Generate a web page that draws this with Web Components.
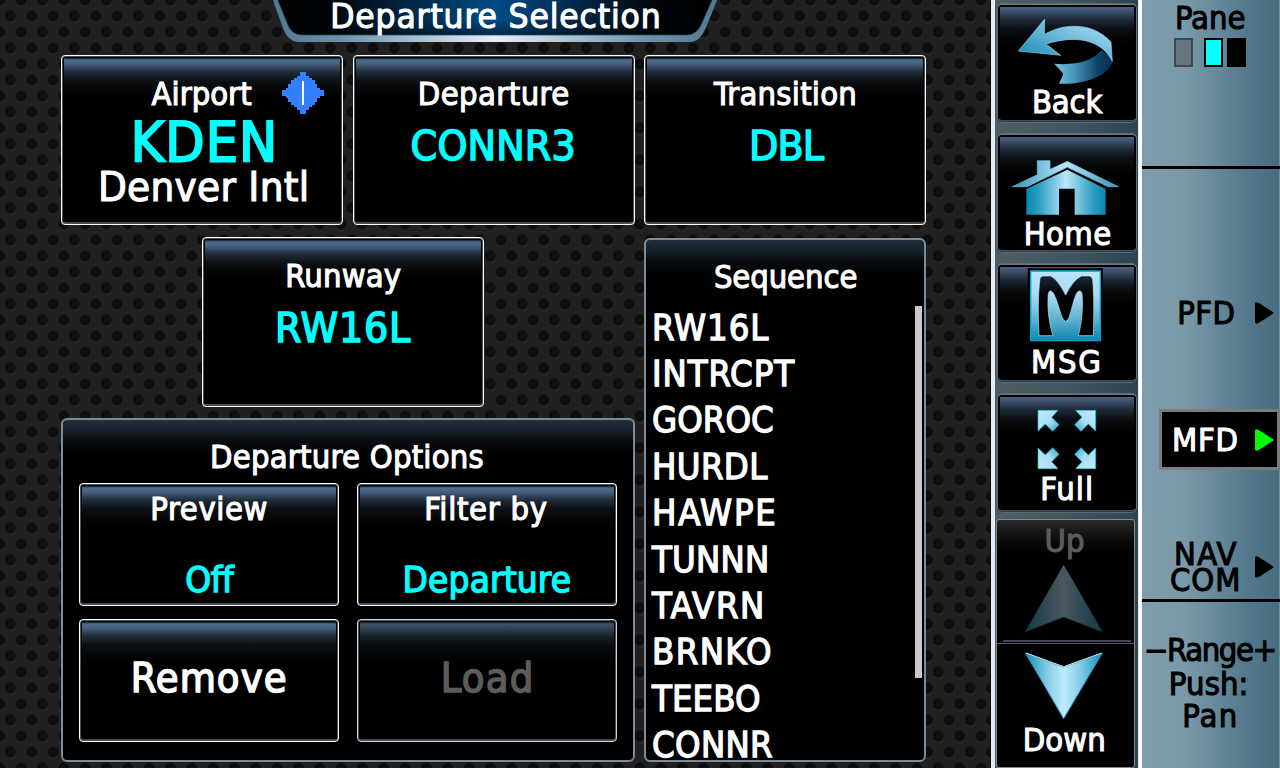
<!DOCTYPE html>
<html lang="en">
<head>
<meta charset="utf-8">
<title>Departure Selection</title>
<style>
html,body{margin:0;height:100%;overflow:hidden;background:#1d1d1d}
body{font-family:"DejaVu Sans Condensed","DejaVu Sans",sans-serif;font-stretch:condensed;color:#fff}
</style>
</head>
<body>
<gtc-screen>
  <title-tab slot="main"><ui-label size="34" width="326">Departure Selection</ui-label></title-tab>
  <departure-form slot="main">
    <touch-card slot="top"><ui-label size="31.5" width="101" gap="22.3">Airport</ui-label><ui-label size="55" width="140" gap="5.6" dx="2" heavy tone="cyan">KDEN</ui-label><ui-label size="40.5" width="206" gap="-3.8" dx="2">Denver Intl</ui-label><airport-mark slot="badge"></airport-mark></touch-card>
    <touch-card slot="top"><ui-label size="31.5" width="149" gap="22.3">Departure</ui-label><ui-label size="41" width="162" gap="15.4" heavy tone="cyan">CONNR3</ui-label></touch-card>
    <touch-card slot="top"><ui-label size="31.5" width="143" gap="22.3">Transition</ui-label><ui-label size="41" width="74" gap="15.4" dx="1" heavy tone="cyan">DBL</ui-label></touch-card>
    <touch-card slot="runway"><ui-label size="31.5" width="114" gap="22.3">Runway</ui-label><ui-label size="41" width="134" gap="15.4" heavy tone="cyan">RW16L</ui-label></touch-card>
    <group-panel slot="options">
      <ui-label size="31.5" width="272" gap="21.3" dx="-1">Departure Options</ui-label>
      <option-grid>
        <touch-card><ui-label size="31.5" width="115" gap="9.3">Preview</ui-label><ui-label size="35.5" width="49" gap="37" heavy tone="cyan">Off</ui-label></touch-card>
        <touch-card><ui-label size="31.5" width="121" gap="9.3" dx="-1">Filter by</ui-label><ui-label size="35.5" width="165" gap="37" heavy tone="cyan">Departure</ui-label></touch-card>
        <touch-card><ui-label size="40" width="153" gap="37.2" heavy>Remove</ui-label></touch-card>
        <touch-card dim><ui-label size="40" width="88" gap="37.2" heavy tone="dim">Load</ui-label></touch-card>
      </option-grid>
    </group-panel>
    <group-panel slot="sequence">
      <ui-label size="31.5" width="142" gap="21.3" dx="1">Sequence</ui-label>
      <waypoint-list></waypoint-list>
    </group-panel>
  </departure-form>

  <side-button slot="keys" icon="back" icon-height="83.4"><ui-label size="31.5" width="70">Back</ui-label></side-button>
  <side-button slot="keys" icon="home" icon-height="85.4"><ui-label size="31.5" width="85">Home</ui-label></side-button>
  <side-button slot="keys" icon="msg" icon-height="83.4"><ui-label size="31.5" width="67" dx="-1">MSG</ui-label></side-button>
  <side-button slot="keys" icon="full" icon-height="80.4"><ui-label size="31.5" width="50">Full</ui-label></side-button>
  <scroll-keys slot="keys"></scroll-keys>

  <pane-strip slot="strip"></pane-strip>
</gtc-screen>

<script>
const FAMILY = '"DejaVu Sans Condensed","DejaVu Sans",sans-serif';
const pen = document.createElement('canvas').getContext('2d');

class Base extends HTMLElement {
  constructor(){ super(); this.attachShadow({mode:'open'}); }
  paint(html){ this.shadowRoot.innerHTML = html; }
}

/* One line of text, tracked so that its ink spans the requested width. */
class UiLabel extends Base {
  connectedCallback(){
    const size = +this.getAttribute('size');
    const stroke = this.hasAttribute('heavy') ? size * .036 : 1.05;
    const stretch = 1.03;
    const want = (+this.getAttribute('width')) / stretch - stroke;
    const text = this.textContent.trim();
    pen.font = `condensed ${size}px ${FAMILY}`;
    const m = pen.measureText(text);
    const ink = m.actualBoundingBoxRight + m.actualBoundingBoxLeft;
    const ls = (want - ink) / Math.max(1, text.length - 1);
    const tones = {cyan:'#00ffff', dim:'#5c5c5c', black:'#000'};
    const color = tones[this.getAttribute('tone')] || '#fff';
    const left = this.getAttribute('align') === 'left';
    const drop = [31.5, 40, 41].includes(size) ? 1 : 0;
    this.paint(`<style>
      :host{display:flex;justify-content:${left?'flex-start':'center'};flex:none;
        height:${this.getAttribute('line')||size}px;line-height:${this.getAttribute('line')||size}px;
        font-size:${size}px;color:${color};white-space:pre;
        margin-top:${this.getAttribute('gap')||0}px;
        letter-spacing:${ls.toFixed(3)}px;-webkit-text-stroke:${stroke.toFixed(2)}px ${color}}
      span{margin-right:${(-ls).toFixed(3)}px;transform-origin:${left?'0':'50%'} 50%;
        transform:translate(${this.getAttribute('dx')||0}px,${drop}px) scaleX(${stretch})}
    </style><span><slot></slot></span>`);
  }
}

class GtcScreen extends Base {
  connectedCallback(){ this.paint(`<style>
    :host{display:grid;grid-template-columns:991px 4px 143px 4px 138px;width:1280px;height:768px;overflow:hidden}
    main{background:
      radial-gradient(circle,#101010 0 1.8px,#0b0b0b 3.8px,#101010 4.8px,#191919 5.6px,transparent 6.2px) -0.3px 0/21.333px 32px,
      radial-gradient(circle,#101010 0 1.8px,#0b0b0b 3.8px,#101010 4.8px,#191919 5.6px,transparent 6.2px) 10.4px 16px/21.333px 32px,
      radial-gradient(circle at 50% 53%,#2c2c2c 5px,transparent 6.8px) -0.3px 0/21.333px 32px,
      radial-gradient(circle at 50% 53%,#2c2c2c 5px,transparent 6.8px) 10.4px 16px/21.333px 32px,#202020;
      border-right:1px solid #111;box-sizing:border-box}
    .rule{background:#e4ecf8}
    .rule.b{background:linear-gradient(90deg,#dfe6ee,#fff 40%)}
    nav{background:linear-gradient(90deg,#4e5e65,#42565f 50%,#2b4552);display:flex;flex-direction:column;
      gap:10px;padding:3px 0 0 2px;box-sizing:border-box}
    aside{background:linear-gradient(90deg,#7f9dac 0,#7b9aa9 30%,#66889a 55%,#52778a 78%,#486d80 99%,#6d8fa0 99.5%)}
  </style><main><slot name="main"></slot></main><div class="rule"></div><nav><slot name="keys"></slot></nav><div class="rule b"></div><aside><slot name="strip"></slot></aside>`); }
}

class TitleTab extends Base {
  connectedCallback(){ this.paint(`<style>
    :host{display:grid;margin-left:270px;width:450px;height:42px}
    svg,div{grid-area:1/1}
    div{margin-top:-.8px}
  </style>
  <svg width="450" height="42" viewBox="270 0 450 42"><defs>
    <linearGradient id="f"><stop offset="0" stop-color="#000"/><stop offset=".12" stop-color="#000408"/><stop offset=".5" stop-color="#004c86"/><stop offset=".88" stop-color="#000408"/><stop offset="1" stop-color="#000"/></linearGradient>
    <linearGradient id="s"><stop offset="0" stop-color="#4f7891"/><stop offset=".15" stop-color="#6b91a6"/><stop offset=".5" stop-color="#e6eefb"/><stop offset=".85" stop-color="#6b91a6"/><stop offset="1" stop-color="#4f7891"/></linearGradient>
    <linearGradient id="v" x2="0" y2="1"><stop offset=".6" stop-color="#000" stop-opacity="0"/><stop offset="1" stop-color="#000" stop-opacity=".45"/></linearGradient></defs>
    <path d="M272-2L282 25Q287 42 299 42H690Q701 41.500 707 25L718-2Z" fill="url(#s)"/>
    <path d="M277-2L287 23Q291 35 302 35H687Q697 35 702 23L713-2Z" fill="url(#f)"/>
    <path d="M277-2L287 23Q291 35 302 35H687Q697 35 702 23L713-2Z" fill="url(#v)" stroke="#23485e" stroke-opacity=".7"/>
  </svg><div><slot></slot></div>`); }
}

class DepartureForm extends Base {
  connectedCallback(){ this.paint(`<style>
    :host{display:grid;margin:13px 0 0 61px;width:865px;grid-template-columns:282px 282px 282px;
      grid-template-rows:170px 525px;column-gap:9.5px;row-gap:12px}
    .left{grid-column:1/3;display:flex;flex-direction:column;gap:11px}
    .rw{margin-left:141px;width:282px;height:170px;display:grid}
    .op{height:344px;display:grid}
    .sq{display:grid;margin-top:1px;height:524px}
  </style><slot name="top"></slot>
  <div class="left"><div class="rw"><slot name="runway"></slot></div><div class="op"><slot name="options"></slot></div></div>
  <div class="sq"><slot name="sequence"></slot></div>`); }
}

class TouchCard extends Base {
  connectedCallback(){
    const dim = this.hasAttribute('dim');
    this.paint(`<style>
    :host{display:block;position:relative;box-sizing:border-box;border:1px solid ${dim?'#cfd3d6':'#fff'};border-radius:4px;
      background:#000;box-shadow:inset 0 0 0 1px #46535f,inset 0 -2px 0 #3c4a5a}
    .face{height:100%;box-sizing:border-box;display:flex;flex-direction:column;
      background:linear-gradient(${dim?'#121a21 0,#3d5368 2px,#31465a 6px,#1a2530 13px,#0b1015 21px':'#141b23 0,#4f6b8d 2px,#46607f 6px,#202c39 14px,#0d1217 22px'},#030405 33px,#000 43px) 2px 2px/calc(100% - 4px) calc(100% - 5px) no-repeat}
    .badge{position:absolute;right:18px;top:15.500px}
  </style><div class="face"><slot></slot></div><div class="badge"><slot name="badge"></slot></div>`); }
}

class AirportMark extends Base {
  connectedCallback(){ this.paint(`<style>:host{display:block;width:42px;height:42px}svg{display:block}</style>
  <svg width="42" height="42" viewBox="846 216 126 126" shape-rendering="crispEdges">
  <path fill="#3380ff" d="M900 216H918V228H927V234H936V240H945V252H951V264H960V270H972V288H960V294H951V306H945V315H936V321H927V330H918V342H900V330H891V321H882V315H873V306H864V294H858V288H846V270H858V264H864V252H873V240H882V234H891V228H900Z"/>
  <path fill="#fff" d="M906 243h6v72h-6z"/></svg>`); }
}

class GroupPanel extends Base {
  connectedCallback(){ this.paint(`<style>
    :host{display:flex;flex-direction:column;box-sizing:border-box;border:2px solid #7d8a97;border-radius:6px;overflow:hidden;min-height:0;
      background:linear-gradient(#1f2f3d 0,#14202a 11px,#070b0f 22px,#000 34px)}
  </style><slot></slot>`); }
}

class OptionGrid extends Base {
  connectedCallback(){ this.paint(`<style>
    :host{display:grid;grid-template-columns:260px 260px;grid-auto-rows:123px;gap:13px 18px;margin:10.200px 0 0 16px}
  </style><slot></slot>`); }
}

class WaypointList extends Base {
  connectedCallback(){
    const rows = [['RW16L',115],['INTRCPT',141],['GOROC',121],['HURDL',114],['HAWPE',120],['TUNNN',117],['TAVRN',112],['BRNKO',117],['TEEBO',110],['CONNR',120]];
    this.paint(`<style>
    :host{display:flex;justify-content:space-between;margin:11.800px 2px 0 6px}
    i{display:block;width:7px;height:372px;background:#cacaca;margin-top:1.300px}
  </style><div>${rows.map(([t,w])=>`<ui-label size="35" line="46.400" width="${w}" align="left" heavy>${t}</ui-label>`).join('')}</div><i></i>`); }
}

const stops = (id, attrs, ...c) => `<linearGradient id="${id}" ${attrs}>${c.map(([o,k])=>`<stop offset="${o}" stop-color="${k}"/>`).join('')}</linearGradient>`;
const ICONS = {
  back: ['201 9', `<defs>${stops('a','x1="0" x2="1" y1="1" y2="0"',[0,'#0a86b0'],[.45,'#5fb2d3'],[1,'#b9e6fb'])}${stops('b','',[0,'#78c3e2'],[.3,'#4c9cbf'],[.75,'#0d4268'],[1,'#0a2c50'])}</defs>
    <path fill="url(#b)" d="M513 151C530 162 548 172 548 187C528 232 460 255 387 251L400 221L373 191C430 197 490 184 513 151Z"/>
    <path fill="url(#a)" stroke="#8fd0ea" stroke-width="2" d="M265 153L344 57L343 104C400 68 490 66 543 126L547 184C515 120 440 103 348 132L392 166Z"/>`],
  home: ['201 399', `<defs>${stops('a','',[0,'#0a86b0'],[.15,'#2b9bc0'],[.5,'#b9e6fb'],[.85,'#2b9bc0'],[1,'#0a86b0'])}${stops('c','',[0,'#2f94b8'],[.5,'#b9e6fb'],[1,'#2f94b8'])}</defs>
    <path fill="url(#c)" stroke="#7cc4de" stroke-width="2" d="M247 560L322 524V482H360V508L412 484L565 560H535L412 502L291 560Z"/>
    <path fill="url(#a)" d="M289 567L412 509L527 567V644H434V566H387V644H289Z"/>`],
  msg: ['201 41', `<defs>${stops('a','x2="0" y2="1"',[0,'#b9e6fb'],[.35,'#a6dbf2'],[.7,'#5fb0cf'],[1,'#0a86b0'])}${stops('m','x2="0" y2="1"',[0,'#1b2836'],[.25,'#07090c'],[.4,'#000'])}</defs>
    <path d="M293 57H519V270H293Z"/>
    <path fill="url(#a)" stroke="#00a4d0" stroke-width="4" d="M302 65H511V274H302Z"/>
    <path fill="url(#m)" stroke="#b9e3f3" stroke-width="2" d="M327 259C324 195 324 135 330 88Q332 80 341 80H363Q385 93 407 137Q428 93 454 80H478Q486 81 488 90C492 135 492 195 490 259H445C455 220 460 175 456 133C453 122 445 122 439 133C430 153 425 183 417 205Q407 227 397 205C388 183 382 153 371 133C364 122 357 122 355 133C351 175 357 220 369 259Z"/>`],
  full: ['201 429', `<defs>${stops('a','x2="1" y2="1"',[0,'#c0eafc'],[.55,'#a9def6'],[1,'#2aa5d4'])}<path id="p" fill="url(#a)" stroke="#16c3c9" stroke-width="2" d="M324 481H384L365 502L387 524L368 544L346 522L324 543Z"/></defs>
    <use href="#p"/><use href="#p" transform="matrix(-1 0 0 1 821 0)"/><use href="#p" transform="matrix(1 0 0 -1 0 1137)"/><use href="#p" transform="matrix(-1 0 0 -1 821 1137)"/>`]
};

class SideButton extends Base {
  connectedCallback(){
    const [origin, art] = ICONS[this.getAttribute('icon')], h = +this.getAttribute('icon-height');
    this.paint(`<style>
    :host{display:flex;flex-direction:column;flex:none;width:140px;height:120px;box-sizing:border-box;border-radius:5px;
      background:
        linear-gradient(#4a6180 0,#3d526d 4px,#1d2835 13px,#0b0f14 22px,#030405 31px,#000 40px) 3px 4px/134px 112px no-repeat,#000;
      box-shadow:inset 0 0 0 1px #5b6b77,inset 0 2px 0 #6d7a84,inset 0 -2px 0 #2b3c51,inset 0 -3px 0 #454f60}
    svg{display:block;flex:none;overflow:visible;width:140px;height:${h}px}
  </style><svg viewBox="${origin} 420 ${h*3}">${art}</svg><slot></slot>`); }
}

class ScrollKeys extends Base {
  connectedCallback(){ this.paint(`<style>
    :host{display:flex;flex-direction:column;flex:none;width:139px;height:249px;margin:-4px 0 0 -1px;box-sizing:border-box;
      border:1px solid #85888a;border-radius:3px;background:linear-gradient(#2a2a2a,#161616 12px,#080808 24px,#000 34px)}
    svg{display:block;flex:none}
  </style>
  <ui-label size="31.5" width="38" gap="5.400" dx="-1" tone="dim">Up</ui-label>
  <svg width="137" height="167.400" viewBox="201 147 411 502"><defs>
    ${stops('u','',[0,'#14394a'],[.5,'#4b575f'],[1,'#14394a'])}${stops('d','',[0,'#1a8fb5'],[.3,'#8acfe8'],[.5,'#bdebfd'],[.7,'#8acfe8'],[1,'#1a8fb5'])}
    ${stops('g','x2="0" y2="1"',[0,'#4a575e'],[1,'#0f3140'])}</defs>
    <path fill="url(#u)" stroke="url(#g)" stroke-width="2" d="M401 172L517 371L401 327L286 371Z"/>
    <path fill="#3e4456" d="M219 396H603V402H219Z"/><path fill="#455c66" d="M201 405H612V408H201Z"/>
    <path fill="url(#d)" stroke="#2295bb" stroke-width="3" d="M286 435L401 477L517 435L401 632Z"/>
    <path fill="none" stroke="#c5e8f4" stroke-width="3" d="M288 435L401 476L515 435"/>
  </svg>
  <ui-label size="31.5" width="80" dx="-1">Down</ui-label>`); }
}

class PaneArrow extends Base {
  connectedCallback(){ this.paint(`<style>:host{display:block;width:19px;height:22px}svg{display:block}</style>
  <svg width="19" height="22" viewBox="0 0 57 66"><path d="M0 5Q0 1 5 1L11 3L53 30Q57 33 53 36L11 63L5 65Q0 65 0 61Z" fill="${this.getAttribute('color')}"/></svg>`); }
}

class PaneStrip extends Base {
  connectedCallback(){ this.paint(`<style>
    :host{display:flex;flex-direction:column;height:768px}
    hr{border:0;margin:0;height:3px;background:#000;flex:none}
    section{box-sizing:border-box;flex:none}
    .s{display:flex;margin:3.900px 0 0 32px}
    .s i{width:15px;height:25px;border:2px solid #000;background:#000;margin-right:4px}
    .s i.g{background:#66767e;border-color:#3d4a50;margin-right:11px}.s i.c{background:#0ff}
    .row{display:flex;align-items:center;justify-content:flex-end;padding-right:6px;height:61px;box-sizing:border-box}
    .row>div{flex:none}
    .pfd .t{width:56px;margin-right:21px}
    .mfd{margin:66px 0 0 17px;padding-right:3px;border:3px solid #7c7c7c;background:#000}
    .mfd .t{width:64px;margin-right:18px}
    .nav{margin-top:66px}.nav .t{width:70px;margin-right:15px}
  </style>
  <section style="height:166px"><ui-label size="31.5" width="68" gap="2.400" dx="-1" tone="black">Pane</ui-label>
    <div class="s"><i class="g"></i><i class="c"></i><i></i></div></section><hr>
  <section style="height:430px;padding-top:113px">
    <div class="row pfd"><div class="t"><ui-label size="31.5" width="56" tone="black" gap="1">PFD</ui-label></div><pane-arrow color="#000"></pane-arrow></div>
    <div class="row mfd"><div class="t"><ui-label size="31.5" width="64">MFD</ui-label></div><pane-arrow color="#00ff00"></pane-arrow></div>
    <div class="row nav"><div class="t"><ui-label size="31.5" width="62" tone="black">NAV</ui-label><ui-label size="31.5" width="68" gap="-5.500" tone="black">COM</ui-label></div><pane-arrow color="#000"></pane-arrow></div>
  </section><hr>
  <section><ui-label size="31.5" width="128" gap="32.400" dx="-1" tone="black">−Range+</ui-label><ui-label size="31.5" width="76" gap="2.500" dx="-2" tone="black">Push:</ui-label><ui-label size="31.5" width="52" gap=".5" dx="-1" tone="black">Pan</ui-label></section>`); }
}

Object.entries({
  'ui-label':UiLabel,'gtc-screen':GtcScreen,'title-tab':TitleTab,'departure-form':DepartureForm,'touch-card':TouchCard,
  'airport-mark':AirportMark,'group-panel':GroupPanel,'option-grid':OptionGrid,'waypoint-list':WaypointList,
  'side-button':SideButton,'scroll-keys':ScrollKeys,'pane-arrow':PaneArrow,'pane-strip':PaneStrip
}).forEach(([n,c])=>customElements.define(n,c));
</script>
</body>
</html>
